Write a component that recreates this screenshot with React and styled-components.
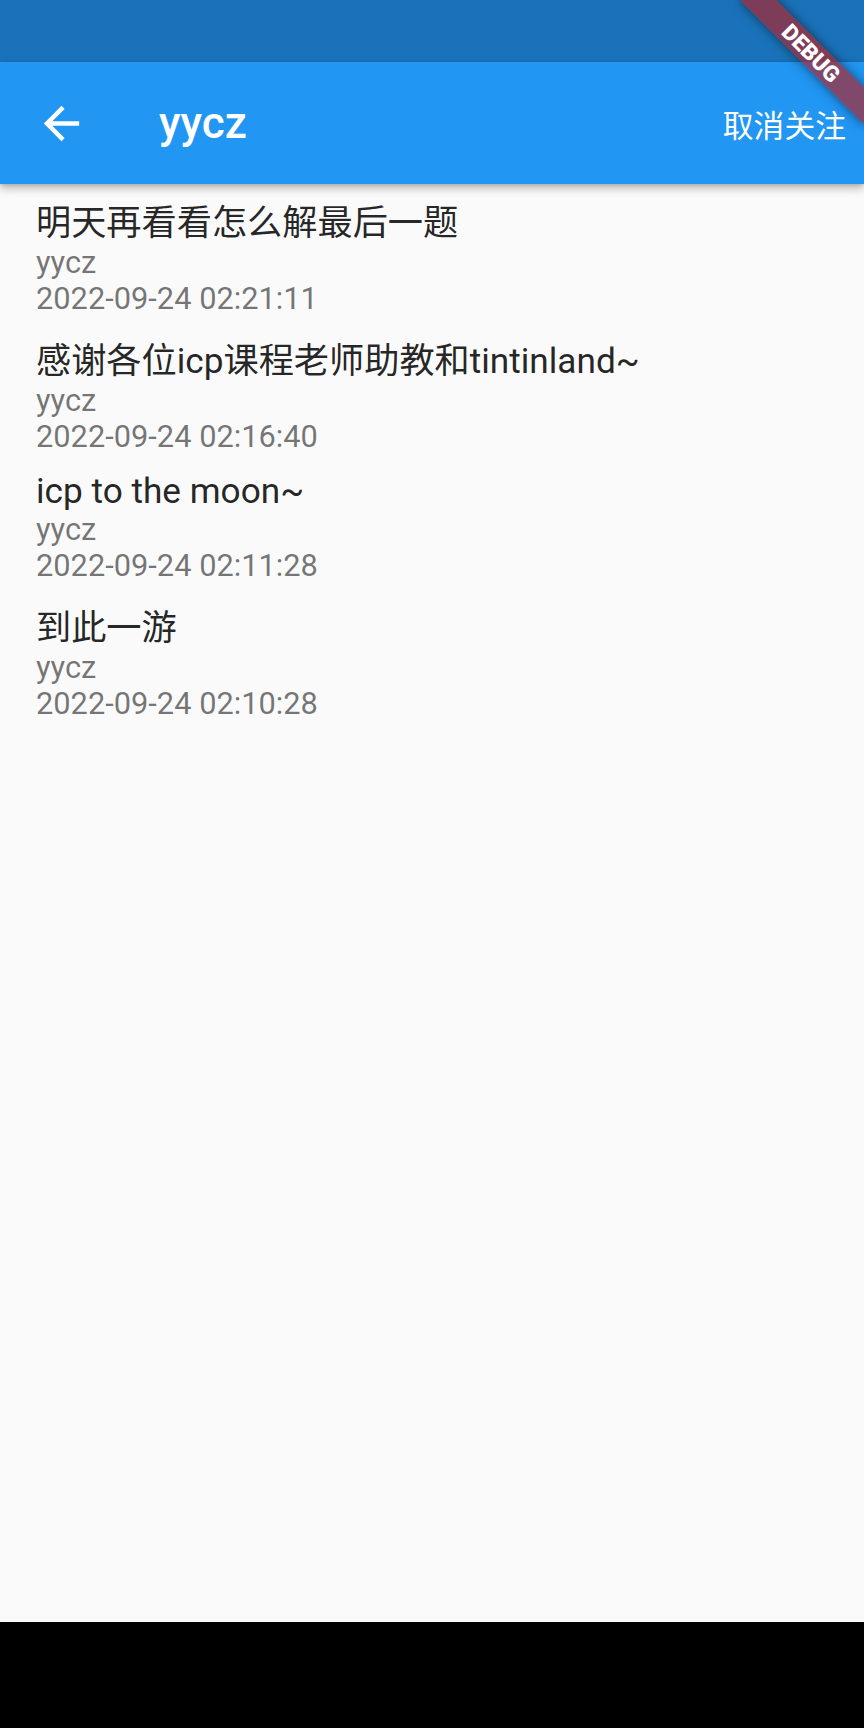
import React from "react";
import styled, { createGlobalStyle } from "styled-components";

const GlobalStyle = createGlobalStyle`
  html, body { margin: 0; padding: 0; background: #fafafa; }
  body { font-family: Roboto, "Noto Sans CJK SC", sans-serif; }
`;

const Screen = styled.div`
  position: relative;
  width: 864px;
  height: 1728px;
  overflow: hidden;
  display: flex;
  flex-direction: column;
  background: #fafafa;
`;

const StatusBar = styled.div`
  height: 62px;
  flex: none;
  background: #1a73ba;
`;

const AppBar = styled.header`
  position: relative;
  z-index: 1;
  height: 122px;
  flex: none;
  display: flex;
  align-items: center;
  background: #2196f3;
  color: #ffffff;
  box-shadow: 0 4px 9px rgba(0, 0, 0, 0.28), 0 1px 3px rgba(0, 0, 0, 0.12);
`;

const Leading = styled.button`
  width: 123px;
  height: 100%;
  flex: none;
  display: flex;
  align-items: center;
  justify-content: center;
  background: none;
  border: 0;
  padding: 0;
  color: #ffffff;
`;

const Title = styled.h1`
  flex: 1;
  margin: 0 0 0 36px;
  font-family: Roboto, "Noto Sans CJK SC", sans-serif;
  font-size: 44px;
  font-weight: 500;
  color: #ffffff;
`;

const Action = styled.button`
  height: 100%;
  flex: none;
  padding: 0 18px;
  background: none;
  border: 0;
  color: #ffffff;
  font-family: Roboto, "Noto Sans CJK SC", sans-serif;
  font-size: 30.8px;
  font-weight: 400;
`;

const Content = styled.main`
  flex: 1;
  padding-top: 2px;
`;

const Item = styled.div`
  display: flex;
  flex-direction: column;
  padding: 8px 36px;
`;

const ItemTitle = styled.div`
  font-size: 35.2px;
  line-height: normal;
  color: rgba(0, 0, 0, 0.87);
`;

const ItemMeta = styled.div`
  font-size: 30.8px;
  line-height: 35.5px;
  color: rgba(0, 0, 0, 0.54);
`;

const NavBar = styled.div`
  height: 106px;
  flex: none;
  background: #000000;
`;

const Banner = styled.div`
  position: absolute;
  z-index: 10;
  left: 723px;
  top: 40px;
  width: 176px;
  height: 26.4px;
  transform: rotate(45deg);
  background: rgba(183, 28, 28, 0.63);
  box-shadow: 0 0 12px rgba(0, 0, 0, 0.5);
  display: flex;
  align-items: center;
  justify-content: center;
  color: #ffffff;
  font-family: Roboto, sans-serif;
  font-size: 22.4px;
  font-weight: 900;
  line-height: 1;
`;

const posts = [
  { text: "明天再看看怎么解最后一题", time: "2022-09-24 02:21:11" },
  { text: "感谢各位icp课程老师助教和tintinland~", time: "2022-09-24 02:16:40" },
  { text: "icp to the moon~", time: "2022-09-24 02:11:28" },
  { text: "到此一游", time: "2022-09-24 02:10:28" },
];

function BackArrow() {
  return (
    <svg width="53" height="53" viewBox="0 0 24 24" fill="#ffffff">
      <path d="M20 11H7.83l5.59-5.59L12 4l-8 8 8 8 1.41-1.41L7.83 13H20v-2z" />
    </svg>
  );
}

export default function App() {
  return (
    <>
      <GlobalStyle />
      <Screen>
        <StatusBar />
        <AppBar>
          <Leading aria-label="back">
            <BackArrow />
          </Leading>
          <Title>yycz</Title>
          <Action>取消关注</Action>
        </AppBar>
        <Content>
          {posts.map((p) => (
            <Item key={p.time}>
              <ItemTitle>{p.text}</ItemTitle>
              <ItemMeta>yycz</ItemMeta>
              <ItemMeta>{p.time}</ItemMeta>
            </Item>
          ))}
        </Content>
        <NavBar />
        <Banner>DEBUG</Banner>
      </Screen>
    </>
  );
}
